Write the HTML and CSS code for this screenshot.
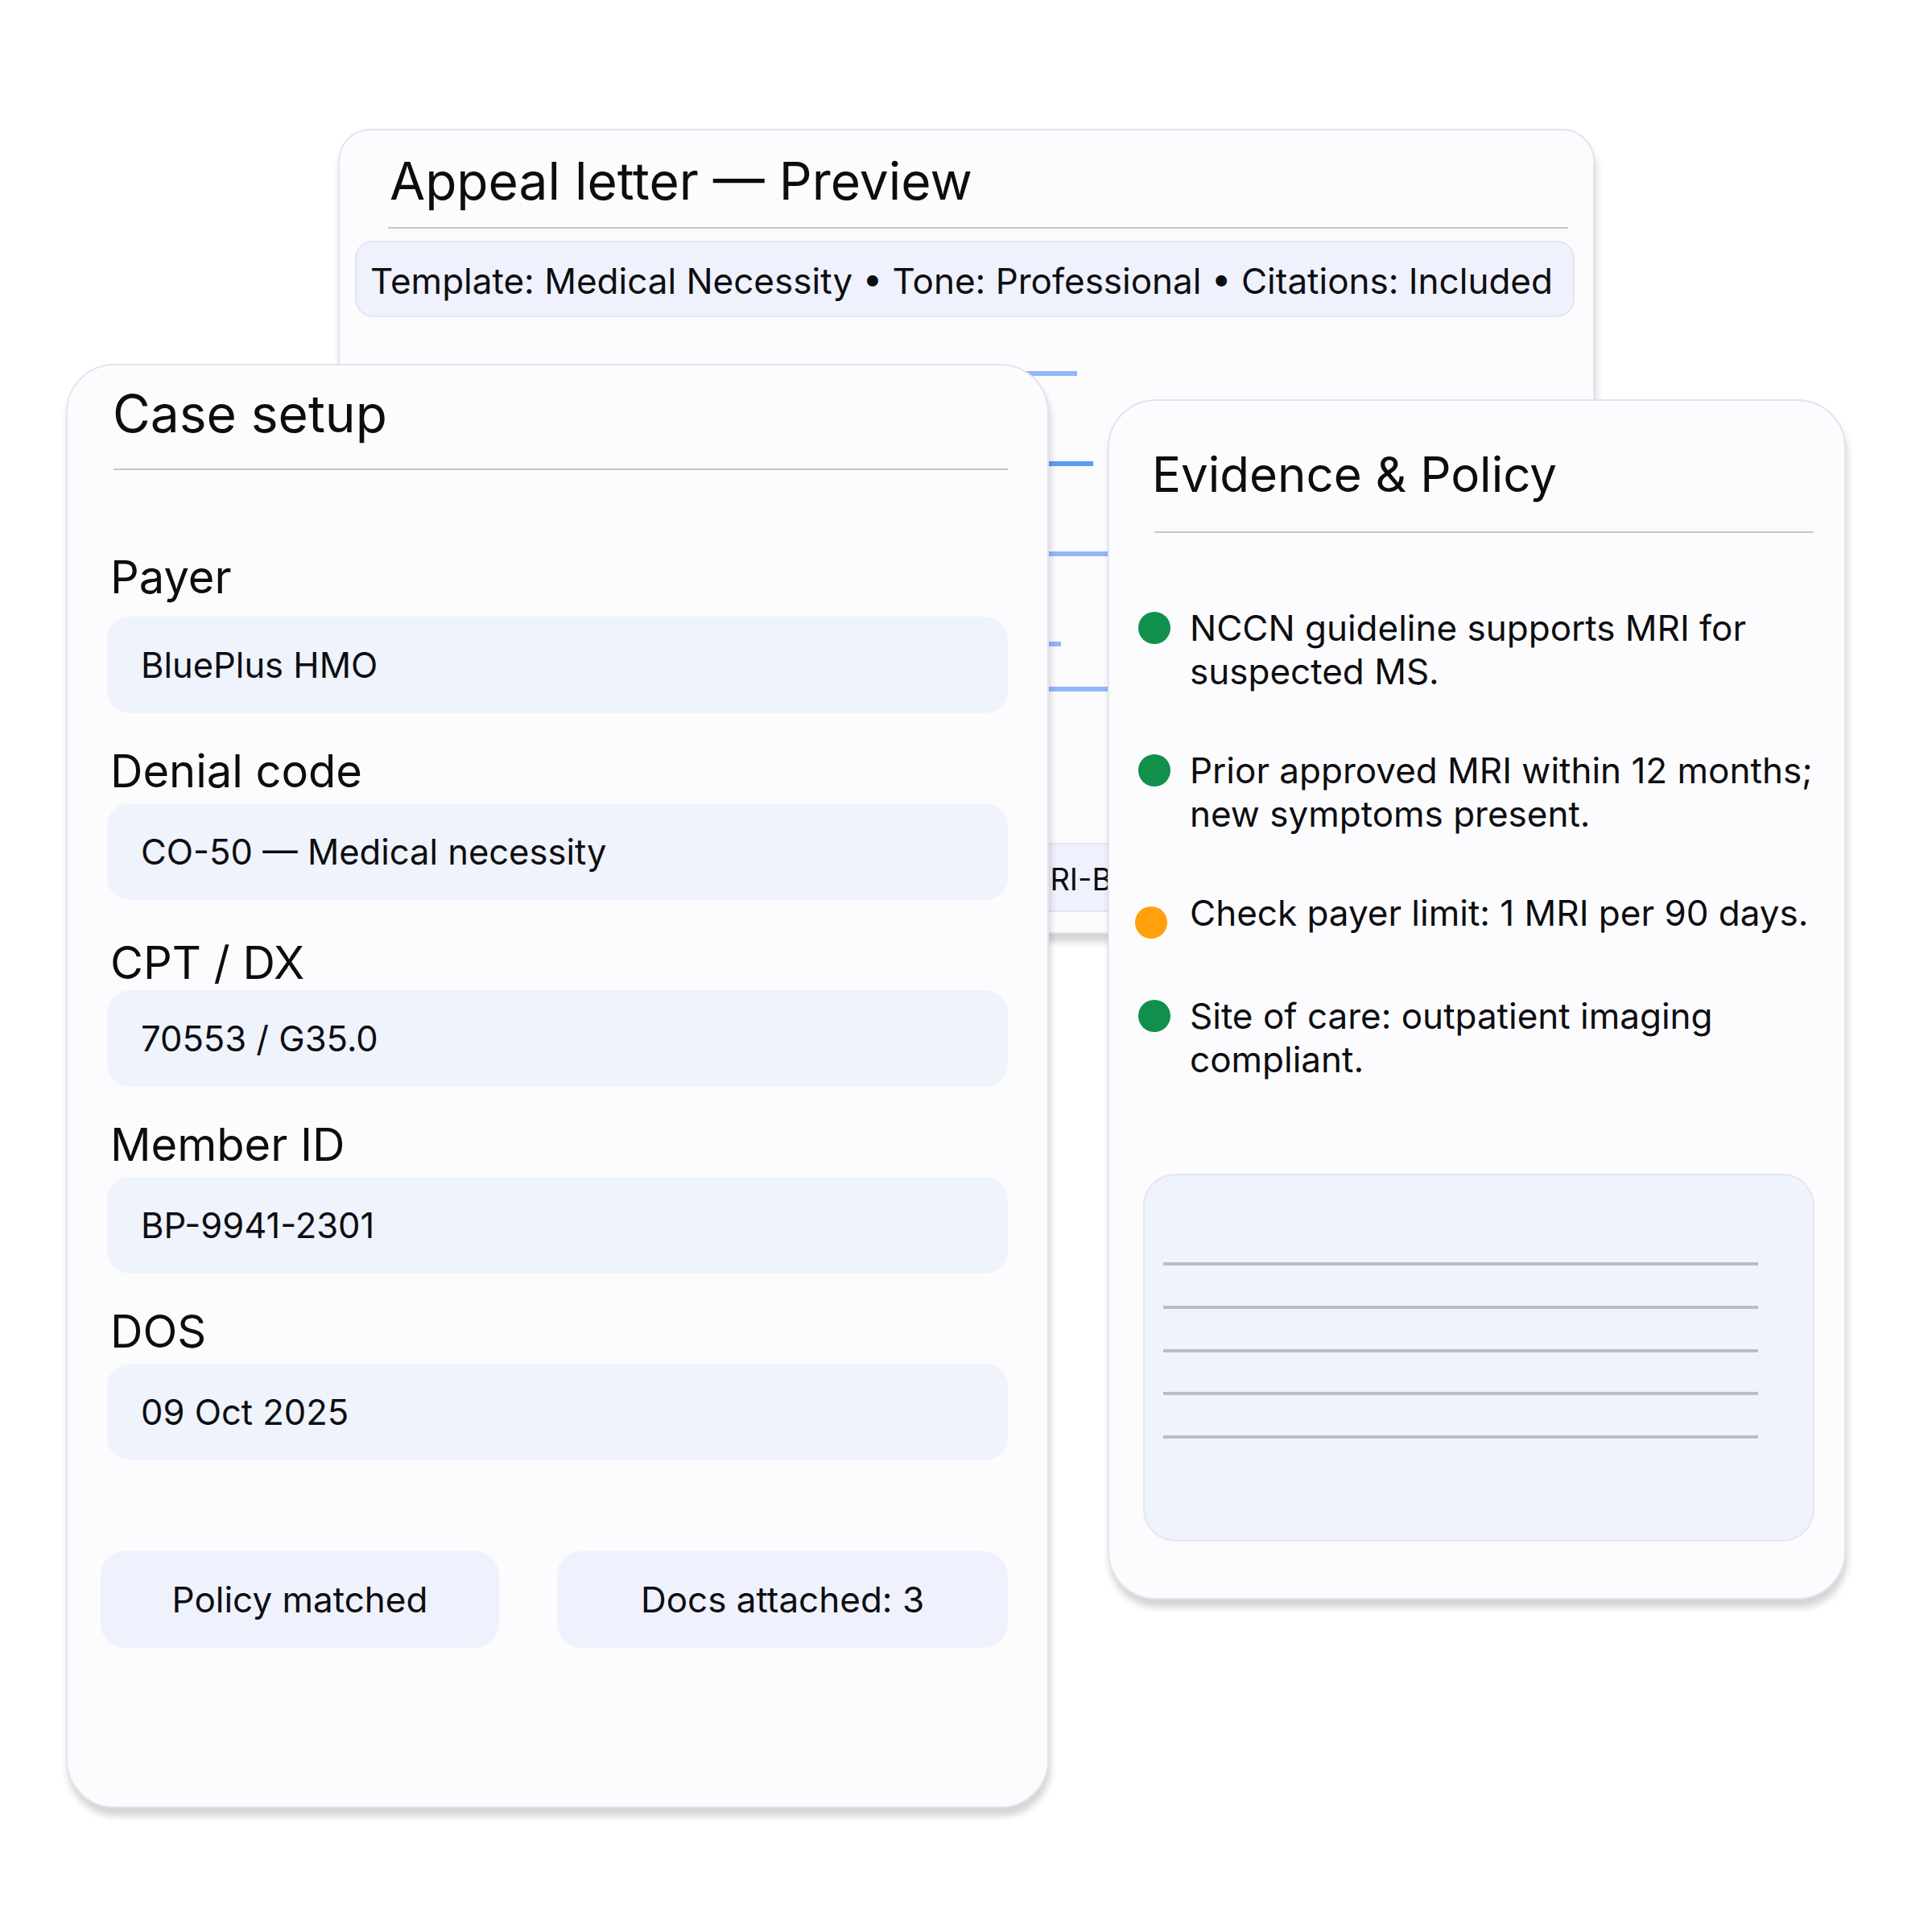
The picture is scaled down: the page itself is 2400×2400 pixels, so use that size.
FILE: index.html
```html
<!DOCTYPE html>
<html lang="en">
<head>
<meta charset="utf-8">
<title>Appeal builder</title>
<link rel="stylesheet" href="styles.css">
</head>
<body>
<div class="stage">
  <section class="card appeal">
    <h2 class="appeal-title">Appeal letter — Preview</h2>
    <div class="divider divider--soft appeal-divider"></div>
    <div class="meta-chip">Template: Medical Necessity • Tone: Professional • Citations: Included</div>
    <div class="letter">
      <div class="sk sk--l1"></div>
      <div class="sk sk--l2"></div>
      <div class="sk sk--l3 sk--strong"></div>
      <div class="sk sk--l4"></div>
      <div class="sk sk--l5"></div>
      <div class="sk sk--l6"></div>
      <div class="sk sk--l7"></div>
      <div class="sk sk--l8"></div>
    </div>
    <div class="attach-chip">Attachment: MRI-BRAIN-2025.pdf</div>
  </section>

  <section class="card case">
    <h2 class="case-title">Case setup</h2>
    <div class="divider divider--soft case-divider"></div>
    <div class="fields">
      <div class="field">
        <div class="field-label field-label--raised">Payer</div>
        <div class="field-box">BluePlus HMO</div>
      </div>
      <div class="field">
        <div class="field-label">Denial code</div>
        <div class="field-box">CO-50 — Medical necessity</div>
      </div>
      <div class="field">
        <div class="field-label field-label--low">CPT / DX</div>
        <div class="field-box">70553 / G35.0</div>
      </div>
      <div class="field">
        <div class="field-label">Member ID</div>
        <div class="field-box">BP-9941-2301</div>
      </div>
      <div class="field">
        <div class="field-label">DOS</div>
        <div class="field-box">09 Oct 2025</div>
      </div>
    </div>
    <div class="pills">
      <div class="pill pill--policy">Policy matched</div>
      <div class="pill pill--docs">Docs attached: 3</div>
    </div>
  </section>

  <section class="card evidence">
    <h2 class="evidence-title">Evidence &amp; Policy</h2>
    <div class="divider evidence-divider"></div>
    <ul class="ev-list">
      <li class="ev-item"><span class="dot dot--ok"></span><span class="ev-text">NCCN guideline supports MRI for suspected MS.</span></li>
      <li class="ev-item"><span class="dot dot--ok"></span><span class="ev-text">Prior approved MRI within 12 months; new symptoms present.</span></li>
      <li class="ev-item"><span class="dot dot--warn"></span><span class="ev-text">Check payer limit: 1 MRI per 90 days.</span></li>
      <li class="ev-item"><span class="dot dot--ok"></span><span class="ev-text">Site of care: outpatient imaging compliant.</span></li>
    </ul>
    <div class="notes">
      <div class="note-line"></div>
      <div class="note-line"></div>
      <div class="note-line"></div>
      <div class="note-line"></div>
      <div class="note-line"></div>
    </div>
  </section>
</div>
</body>
</html>
```

FILE: styles.css
```css
* { box-sizing: border-box; }

html, body {
  margin: 0;
  padding: 0;
  background: #ffffff;
}

body {
  font-family: Inter, "Noto Sans", "Liberation Sans", sans-serif;
  color: #0d0d10;
}

.stage {
  position: relative;
  width: 2400px;
  height: 2400px;
}

.card {
  position: absolute;
  display: flex;
  flex-direction: column;
  background: #fcfcfe;
  border: 2px solid #e3e4ee;
  border-radius: 60px;
  box-shadow: 2px 10px 8px rgba(0, 0, 0, 0.17);
}

h2 {
  margin: 0;
  font-weight: 400;
}

.divider {
  height: 2px;
  background: #c6c6c8;
  flex: none;
}

.divider--soft {
  box-shadow: 0 8px 10px rgba(0, 0, 0, 0.05);
}

/* ---------- Appeal letter ---------- */
.appeal {
  left: 420px;
  top: 160px;
  width: 1561px;
  height: 1000px;
  border-radius: 40px;
  overflow: hidden;
}

.appeal-title {
  font-size: 64px;
  line-height: 77px;
  margin: 24px 0 0 62px;
}

.appeal-divider {
  margin: 19px 31px 0 60px;
}

.meta-chip {
  margin: 15px 23px 0 19px;
  height: 95px;
  display: flex;
  align-items: center;
  padding: 5px 0 0 17px;
  background: #eff2fc;
  border: 2px solid #e3e6f1;
  border-radius: 22px;
  font-size: 44px;
  white-space: nowrap;
}

.letter {
  display: flex;
  flex-direction: column;
  gap: 50px;
  margin: 67px 0 0 67px;
}

.sk {
  height: 6px;
  background: #8fb8fa;
}

.sk--strong { background: #5c9bf7; }

.sk--l1 { width: 849px; }
.sk--l2 { width: 760px; }
.sk--l3 { width: 869px; }
.sk--l4 { width: 700px; }
.sk--l5 { width: 1013px; }
.sk--l6 { width: 640px; }
.sk--l7 { width: 829px; }
.sk--l8 { width: 1113px; }

.attach-chip {
  align-self: flex-start;
  margin: 188px 0 0 595px;
  height: 86px;
  display: flex;
  align-items: center;
  padding: 4px 24px 0;
  background: #eff2fc;
  border: 2px solid #e3e6f1;
  border-radius: 18px;
  font-size: 38px;
  white-space: nowrap;
}

/* ---------- Case setup ---------- */
.case {
  left: 82px;
  top: 452px;
  width: 1221px;
  height: 1794px;
}

.case-title {
  font-size: 64px;
  line-height: 77px;
  margin: 21px 0 0 56px;
}

.case-divider {
  margin: 30px 49px 0 57px;
}

.fields {
  display: flex;
  flex-direction: column;
  gap: 39px;
  margin: 100px 49px 0 49px;
}

.field-label {
  font-size: 56px;
  line-height: 66px;
  margin: 0 0 7px 4px;
}

.field-label--raised {
  margin-bottom: 16px;
}

.field-label--low {
  margin-top: 6px;
  margin-bottom: 1px;
}

.field-box {
  height: 120px;
  display: flex;
  align-items: center;
  padding-left: 42px;
  background: #eff3fc;
  border-radius: 28px;
  font-size: 43.5px;
}

.pills {
  display: flex;
  gap: 72px;
  margin: 113px 0 0 41px;
}

.pill {
  height: 120px;
  display: flex;
  align-items: center;
  justify-content: center;
  background: #eff2fc;
  border-radius: 30px;
  font-size: 44px;
}

.pill--policy { width: 495px; }
.pill--docs { width: 560px; }

/* ---------- Evidence ---------- */
.evidence {
  left: 1376px;
  top: 496px;
  width: 917px;
  height: 1491px;
}

.evidence-title {
  font-size: 60px;
  line-height: 70px;
  margin: 56px 0 0 53px;
}

.evidence-divider {
  margin: 36px 38px 0 56px;
}

.ev-list {
  list-style: none;
  margin: 91px 0 0 36px;
  padding: 0;
  display: flex;
  flex-direction: column;
  gap: 69px;
}

.ev-item {
  display: flex;
  align-items: flex-start;
  gap: 24px;
}

.dot {
  flex: none;
  width: 40px;
  height: 40px;
  border-radius: 50%;
  margin-top: 7px;
}

.dot--ok { background: #11904b; }
.dot--warn {
  background: #ffa00c;
  margin: 19px 4px 0 -4px;
}

.ev-text {
  width: 800px;
  font-size: 44px;
  line-height: 54px;
}

.notes {
  margin: 115px 37px 0 42px;
  height: 457px;
  display: flex;
  flex-direction: column;
  gap: 49.75px;
  padding: 108px 68px 0 23px;
  background: #eff3fc;
  border: 2px solid #e4e6f1;
  border-radius: 40px;
}

.note-line {
  height: 4px;
  background: #b8bdc9;
}
```
